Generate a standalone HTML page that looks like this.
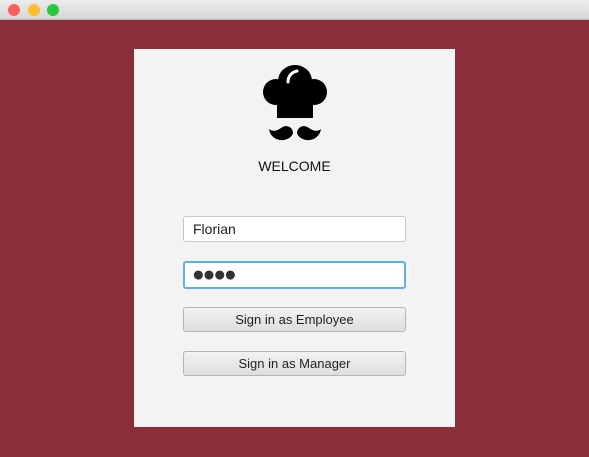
<!DOCTYPE html>
<html><head><style>
body{margin:0;width:589px;height:457px;background:#8b2e3a;font-family:"Liberation Sans",sans-serif;position:relative;overflow:hidden}
.tb{position:absolute;left:0;top:0;width:589px;height:20px;background:linear-gradient(#ececec,#d6d6d6);border-bottom:1px solid #b8b8b8;box-sizing:border-box}
.d{position:absolute;top:4px;width:12px;height:12px;border-radius:50%}
.p{position:absolute;left:134px;top:49px;width:321px;height:378px;background:#f3f3f3}
.f{position:absolute;left:183px;width:223px;box-sizing:border-box;background:#fff;border:1px solid #c8c8c8;border-radius:3px;font-size:14px;color:#222;padding-left:9px}
.b{position:absolute;left:183px;width:223px;height:25px;box-sizing:border-box;border:1px solid #b5b5b5;border-radius:3px;background:linear-gradient(#f2f2f2,#dedede);font-size:13px;color:#222;text-align:center;line-height:23px}
</style></head><body>
<div class="tb"><div class="d" style="left:8px;background:#fe5f57"></div><div class="d" style="left:28px;background:#febc2e"></div><div class="d" style="left:47px;background:#28c840"></div></div>
<div class="p"></div>
<svg style="position:absolute;left:260px;top:62px" width="70" height="84" viewBox="0 0 70 84">
<ellipse cx="35" cy="19" rx="17" ry="16" fill="#000"/>
<circle cx="16" cy="30" r="13" fill="#000"/>
<circle cx="54" cy="30" r="13" fill="#000"/>
<rect x="17" y="28" width="36" height="28" fill="#000"/>
<path d="M28 20 C28 14 32 10 37 9" stroke="#fff" stroke-width="3" fill="none" stroke-linecap="round"/>
<path d="M33 70 C31 63 25 63 21 66 C17 69 13 70 9 67 C10 74 16 79 24 78 C29 77 33 74 33 70Z" fill="#000"/>
<path d="M37 70 C39 63 45 63 49 66 C53 69 57 70 61 67 C60 74 54 79 46 78 C41 77 37 74 37 70Z" fill="#000"/>
</svg>
<div style="position:absolute;left:134px;width:321px;top:158px;text-align:center;font-size:14px;color:#111">WELCOME</div>
<div class="f" style="top:216px;height:26px;line-height:24px">Florian</div>
<div class="f" style="top:261px;height:28px;line-height:24px;border:2px solid #5fb0e6;padding-left:7px;font-size:21px;letter-spacing:-2px;color:#333">●●●●</div>
<div class="b" style="top:307px">Sign in as Employee</div>
<div class="b" style="top:351px">Sign in as Manager</div>
</body></html>
